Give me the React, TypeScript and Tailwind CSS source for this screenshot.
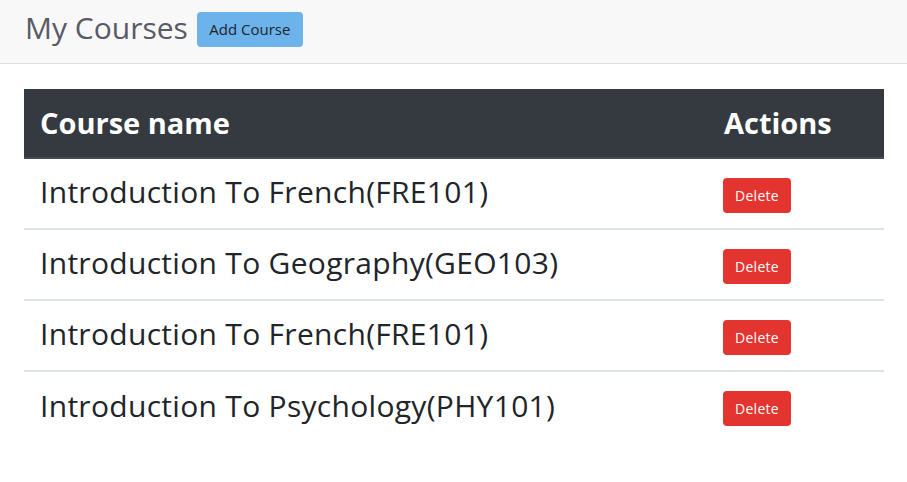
import React from "react";

const courses = [
  "Introduction To French(FRE101)",
  "Introduction To Geography(GEO103)",
  "Introduction To French(FRE101)",
  "Introduction To Psychology(PHY101)",
];

export default function App() {
  return (
    <div className="min-h-screen bg-white font-['Open_Sans','Lato',sans-serif] text-[#212529]">
      {/* top bar */}
      <div className="h-[64px] bg-[#f8f8f8] border-b border-[#dcdcdc] flex items-center px-[25px] gap-[9px]">
        <h1 className="text-[30px] leading-none text-[#5a5a66] font-normal pb-[8px]">My Courses</h1>
        <button className="h-[35px] w-[106px] mb-[4px] rounded-[4px] bg-[#6cb2eb] text-[15px] text-[#212529]">
          Add Course
        </button>
      </div>

      <div className="px-[24px] pt-[25px]">
        <table className="w-[860px] border-collapse">
          <thead>
            <tr className="bg-[#343a40] text-white">
              <th className="h-[69px] px-[16px] text-left text-[29px] font-bold border-b-2 border-[#454d55]">
                Course name
              </th>
              <th className="w-[176px] px-[16px] text-left text-[29px] font-bold border-b-2 border-[#454d55]">
                Actions
              </th>
            </tr>
          </thead>
          <tbody>
            {courses.map((c, i) => (
              <tr key={i} className={i > 0 ? "border-t-2 border-[#dee2e6]" : ""}>
                <td className="h-[71px] px-[16px] pb-[4px] text-[30px] tracking-[0.3px] align-middle">{c}</td>
                <td className="px-[15px] align-top pt-[19px]">
                  <button className="h-[35px] w-[68px] rounded-[4px] bg-[#e3342f] text-white text-[14px] tracking-[0.3px]">
                    Delete
                  </button>
                </td>
              </tr>
            ))}
          </tbody>
        </table>
      </div>
    </div>
  );
}
